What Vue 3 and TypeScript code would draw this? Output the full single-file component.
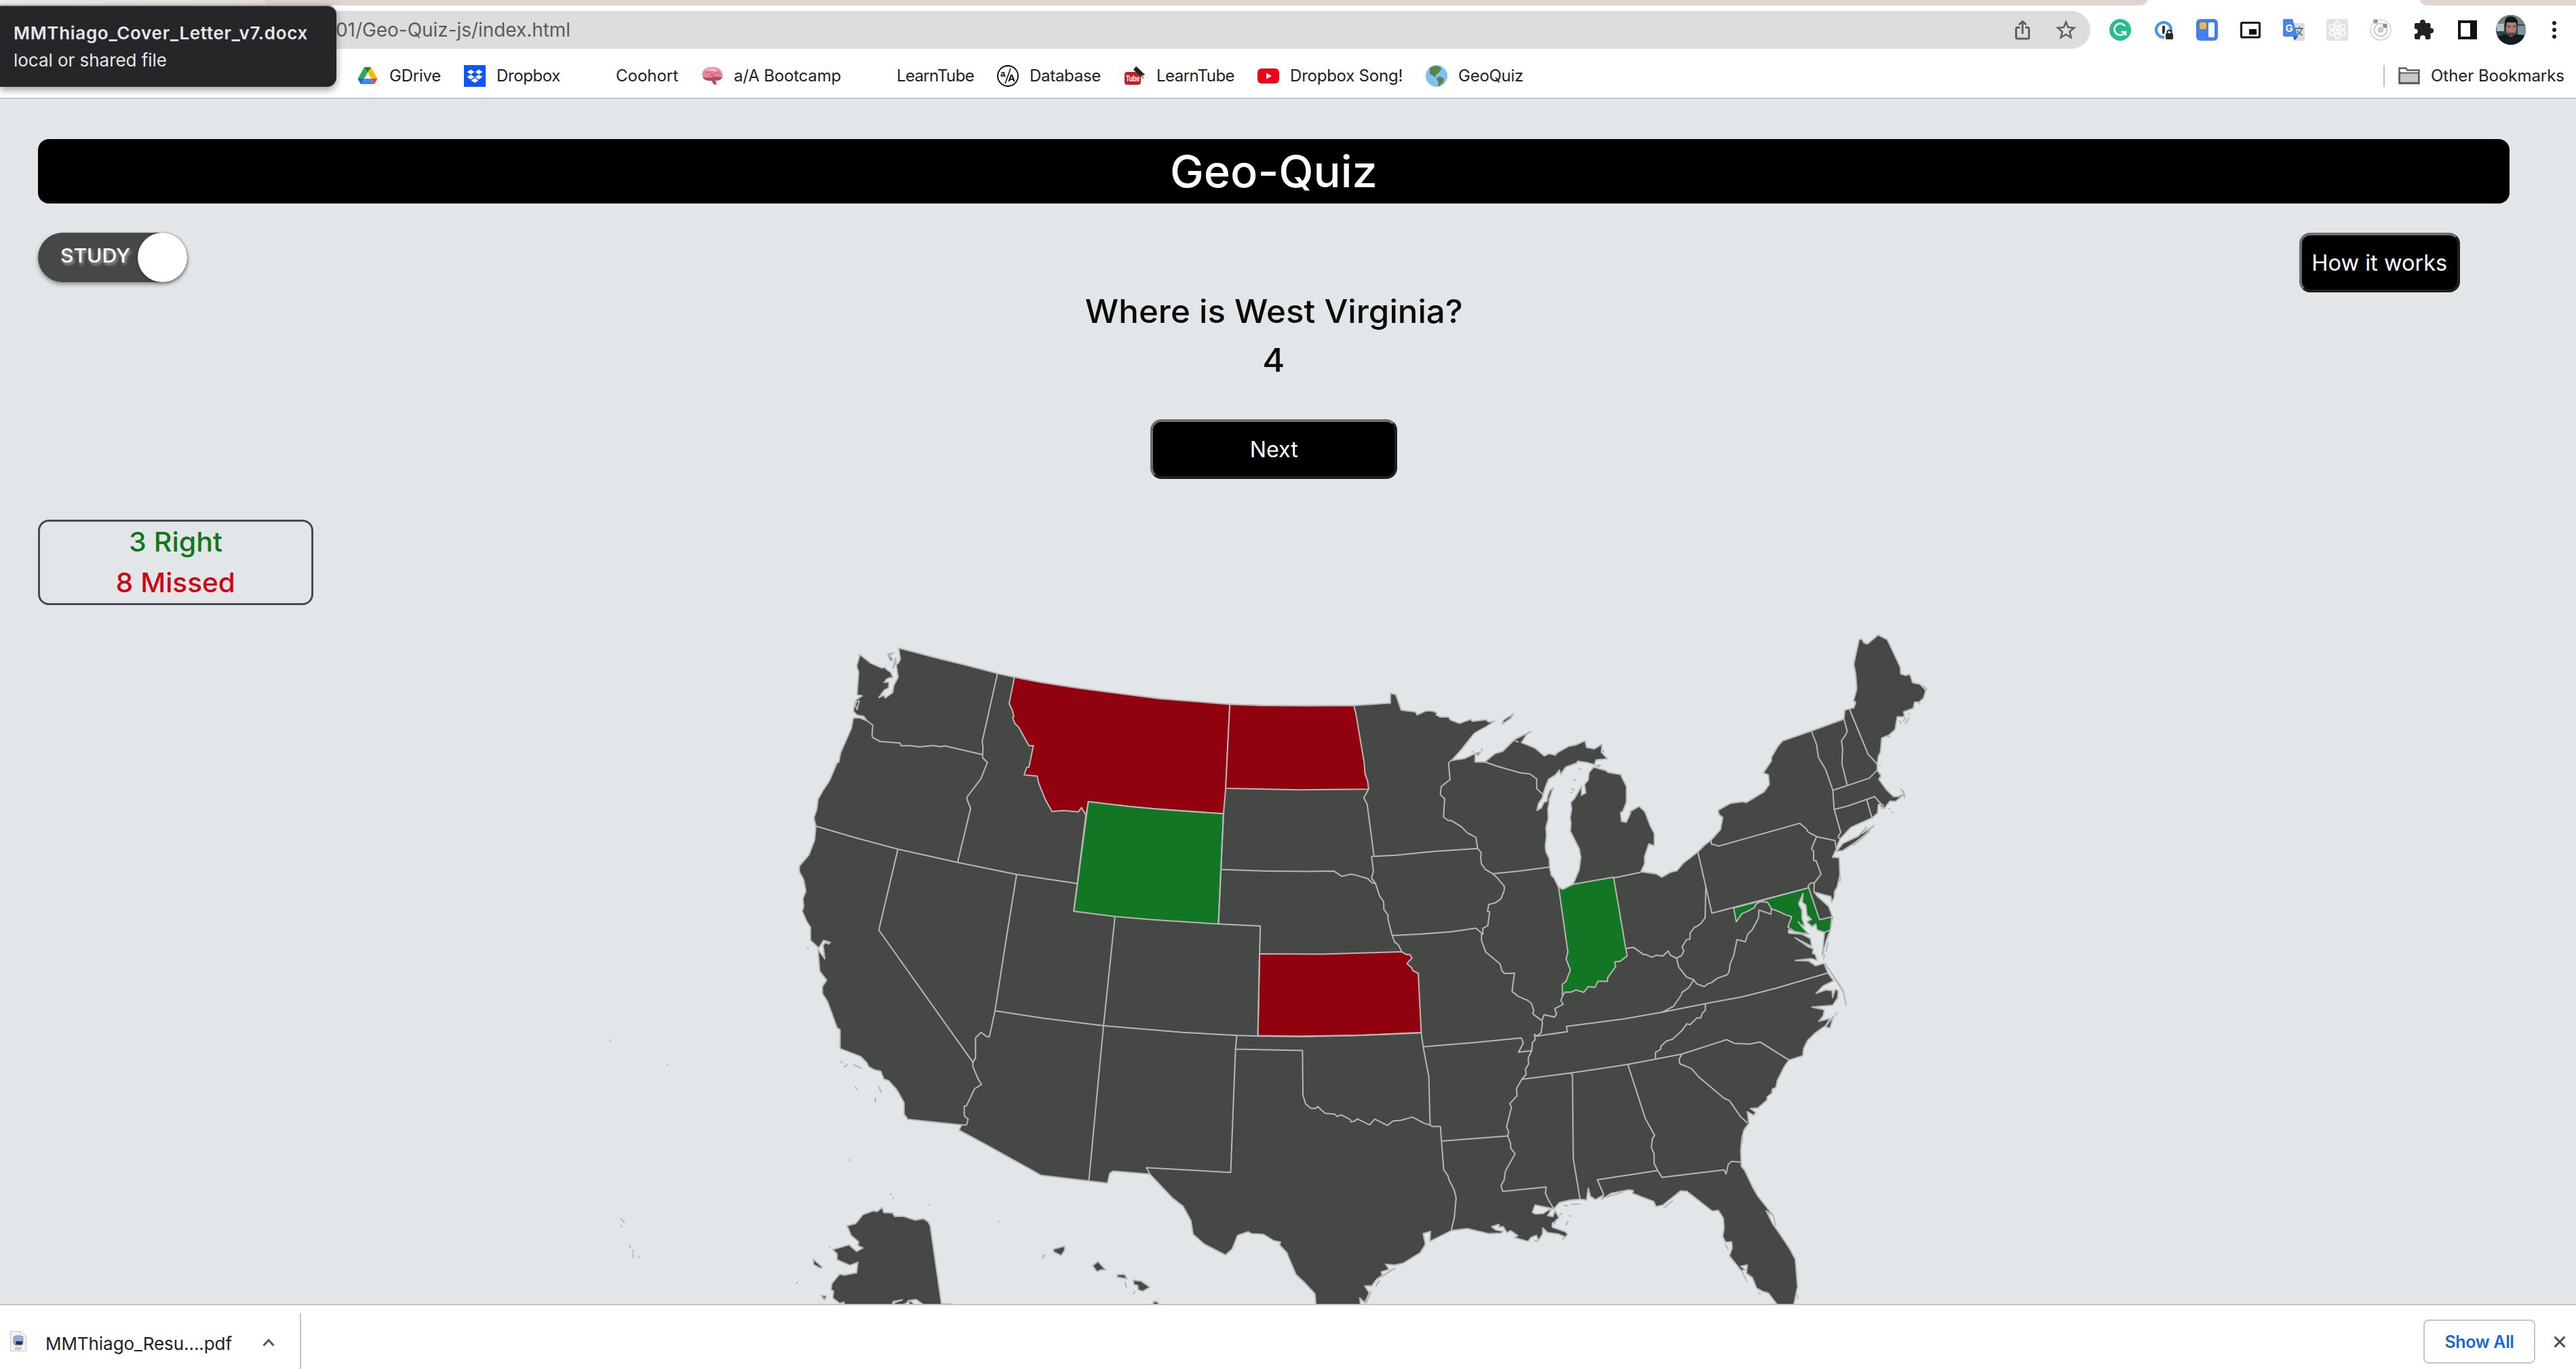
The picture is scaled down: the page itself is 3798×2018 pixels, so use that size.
<script setup lang="ts">
interface Sheet { x: number; y: number; sx: number; sy: number }
interface Bookmark { label: string; width: number; icon: string }
interface State { name: string; status: 'right' | 'missed'; points: string }

const sheets: Record<string, Sheet> = {
  A: { x: 1150, y: 920, sx: 2.8, sy: 3 },
  B: { x: 1700, y: 980, sx: 2.8, sy: 2.8 },
  C: { x: 2080, y: 1000, sx: 3, sy: 2.8 },
  D: { x: 2440, y: 920, sx: 3, sy: 2.8 },
  E: { x: 2100, y: 1400, sx: 2.45, sy: 2.9585 },
  F: { x: 1150, y: 1380, sx: 1.568, sy: 2.8509 },
  G: { x: 0, y: 1500, sx: 1.0453, sy: 3 },
}

function trace(points: string, close = false): string {
  let sheet = sheets.A
  const out: string[] = []
  for (const token of points.trim().split(/\s+/)) {
    if (token.length === 1) {
      sheet = sheets[token]
      continue
    }
    const [px, py] = token.split(',').map(Number)
    out.push(`${(sheet.x + px / sheet.sx).toFixed(1)},${(sheet.y + py / sheet.sy).toFixed(1)}`)
  }
  return `M${out.join('L')}${close ? 'Z' : ''}`
}

const mainland = `A 330,135 375,173 420,194 432,192 445,205 456,212 466,236 450,238 438,245 430,258 450,256 448,282 430,292 408,325 430,314 434,327 465,303 470,270 488,235 480,180 488,174 497,155 490,106
 650,151 770,182 898,218 968,235 1080,258 1230,283 1400,307 1568,330
 B 317,163 450,168 640,169 829,168 980,158 980,118 1002,123 1024,187 1084,195 1090,207 1128,190 1150,190 1172,198 1168,206 1186,216 1220,215 1228,228 1265,242 1312,225 1318,233 1375,227 1384,236 1409,233 1380,252 1330,280
 C 276,232 225,292 180,339 240,330 285,310 284,345 328,345 372,311 407,301 460,252 532,219 512,232 490,265 550,288 590,320 612,311 640,317 648,307 700,280 730,275 771,258 777,285 812,291 846,272 843,305 870,332 820,336 812,356
 780,347 738,342 733,350 685,366 662,397 658,378 640,398 609,417 595,450 585,480 582,492 565,517 558,545 577,535 590,511 602,508 606,485 615,463 630,452 612,500 612,513 606,540 608,580 598,615 600,650 595,690 598,717 612,742 614,780 621,812 634,825 652,860 672,871 718,850 745,790 752,740 746,705 706,630 709,600 705,575 712,540 708,512 725,495 755,445 755,483 774,472 769,437 785,420 788,390 809,366 862,380 872,388 928,397 954,447 953,513 937,550 928,553 932,590 953,594 973,555 970,550 1010,528 1035,550 1060,610 1077,640 1077,690 1053,683 1034,735 1034,765 1018,798 1086,807 1110,821 1150,800 1177,794 1205,763
 D 190,940 220,912 248,892 290,848 300,798 283,785 280,768 333,740 388,733 405,736 483,692 506,662 502,622 480,614 515,565 515,550 545,503 565,482 692,441 836,392 840,355 860,350 880,345 888,322 878,317 893,268 888,205 880,165 903,65 915,62 925,78 940,82 988,45 1028,65 1085,178 1087,205 1110,212 1127,207 1140,242 1172,248 1198,273 1188,305 1168,322 1148,322 1143,347 1100,362 1103,383 1072,382 1062,435 1035,458 1003,470 997,530 988,545 983,578 983,603 1000,626 990,640 1025,685 1055,712 1075,712 1102,700 1088,680 1100,690 1106,716 1098,705 1064,732 1040,730 1013,762 1000,742 988,745 985,780 960,800 868,838 820,885 806,915 801,930
 785,962 815,965 818,1035 806,1085 795,1102 792,1130 782,1147 778,1124 740,1115 703,1105 720,1125 768,1165 785,1208 776,1262 760,1300 740,1365 750,1272 717,1262 712,1238 695,1248 680,1236 672,1228 692,1218 672,1200 668,1160 652,1148 655,1112 635,1155 650,1180 650,1215 662,1245 645,1242 634,1228 655,1254 680,1280 615,1268 590,1262 592,1275 650,1280 688,1298 693,1330 620,1295 680,1333 700,1340 697,1360 708,1362 718,1388 690,1380 620,1388 680,1390 710,1410 748,1400
 E 1458,102 1478,135 1440,158 1415,190 1450,175 1473,178 1475,208 1485,172 1495,180 1493,210 1475,242 1400,250 1445,262 1440,290 1425,312 1465,300 1450,330 1410,365 1385,395 1370,430 1367,462 1317,481 1300,510 1275,570 1270,600 1257,608 1255,625 1238,642 1238,655 1205,690 1178,692 1197,710 1190,722 1167,706 1172,757 1155,785 1147,820 1143,870 1145,945 1157,962 1188,1040 1205,1075 1262,1162 1235,1138 1258,1195 1290,1250 1320,1305 1340,1350 1348,1470 1335,1545 1335,1590
 1295,1590 1270,1540 1243,1497 1222,1490 1200,1475 1185,1430 1163,1410 1167,1375 1143,1380 1158,1395 1145,1400 1102,1335 1112,1300 1110,1274 1088,1275 1078,1250 1083,1215 1080,1170 1062,1137 1040,1140 948,1053 925,1052 862,1113 837,1120 829,1098 752,1062 755,1050 738,1047 675,1062 640,1088 647,1070 618,1090 600,1075 592,1040 586,1092 563,1088 525,1092 487,1103 468,1130
 400,1113 390,1145 400,1152 430,1150 448,1135 458,1135 445,1160 465,1163 472,1138 486,1168 470,1188 462,1192 462,1210 510,1230 518,1243 500,1262 505,1250 485,1240 445,1233 428,1213 427,1240 412,1268 405,1245 385,1255 375,1272 325,1255 338,1247 312,1225 298,1234 285,1207 270,1210 270,1197 243,1208 258,1222 285,1228 278,1236 232,1238 155,1216 97,1225 20,1272 22,1228
 F 1487,1250 1492,1295 1480,1330 1440,1375 1420,1382 1400,1378 1408,1400 1390,1410 1392,1425 1378,1445 1368,1470 1352,1470 1362,1500 1352,1540 1340,1520 1345,1580 1240,1580 1237,1503 1215,1460 1193,1422 1175,1345 1172,1330 1155,1298 1157,1285 1142,1280 1118,1253 1090,1250 1082,1242 1058,1257 1045,1315 1030,1340 980,1293 955,1252 950,1195 932,1135 907,1100 855,1000 770,987 762,997 757,1038 604,1005 460,860 414,815 420,793 296,770 287,748 287,700 270,645 252,608 240,600 233,567 218,562 205,548 200,530 186,505 139,472 139,392 132,385 110,275 98,240 98,212 108,185 92,147
 A 157,1440 185,1480 178,1420 188,1408 200,1415 208,1408 180,1398 160,1432 126,1398 126,1340 112,1318 92,1270 98,1250 95,1215 107,1180 98,1130 80,1095 80,1070 120,1020 143,955 148,893 140,857 152,820 157,775 178,735 205,692 235,615 243,610 250,570 295,460 303,415 330,415 360,428 345,408 318,402 303,385 310,345 327,340 318,378 312,360 315,335 340,317 318,312 325,212 317,185`

const alaska = `F 155,1217 175,1208 192,1170 215,1155 225,1157 236,1140 240,1162 260,1163 265,1178 285,1177 312,1193 332,1187 342,1200 347,1215 376,1580 340,1560 315,1527 300,1530 318,1560 300,1570 298,1530 290,1545 262,1560 265,1540 283,1528 262,1535 255,1570 150,1570 148,1538 138,1543 122,1520 124,1492 118,1485 120,1460 138,1420 148,1425 177,1415 180,1370 162,1383 132,1360 132,1335 122,1317 160,1297 177,1325 192,1310 180,1300 182,1285 165,1258`

const islands: string[] = [
  'C 405,188 410,172 440,155 455,145 442,165',
  'D 803,938 832,905 900,875 935,838 915,865 968,832 930,868 880,905 830,935',
  'F 632,1325 633,1315 658,1303 658,1320 650,1342',
  'F 606,1352 610,1342 613,1340',
  'F 723,1385 735,1367 753,1403 742,1402 733,1410',
  'F 780,1422 797,1422 802,1440 780,1433',
  'F 817,1445 835,1450 855,1475 838,1493 828,1485 827,1468 818,1464',
  'F 798,1453 801,1476',
  'F 863,1535 872,1536 885,1570 863,1560',
  'F 817,1502 821,1493',
  'F 77,1358 97,1390 94,1396 78,1380',
  'F 95,1510 108,1512 103,1528',
  'F 170,540 188,555', 'F 148,550 156,540', 'F 141,527 144,534', 'F 174,634 178,644',
  'F 228,632 234,655', 'F 220,682 221,697', 'F 255,1084 257,1086', 'F 261,1101 262,1103',
  'F 345,1127 346,1129', 'F 506,1198 507,1200', 'F 160,940 161,942', 'F 114,1305 116,1307',
  'G 940,98 941,102', 'G 1028,208 1029,211', 'G 957,890 962,905', 'G 957,920 958,925',
  'G 970,1008 972,1016', 'G 975,1030 975,1037', 'G 976,1045 976,1063', 'G 985,1057 986,1060', 'G 1228,1171 1229,1175',
  'A 445,132 462,130 470,127 452,138 465,158 456,162', 'A 478,172 466,194 478,150', 'A 113,1434 116,1435',
  'C 272,301 276,303', 'C 290,308 308,304 296,320', 'C 313,290 316,297', 'C 744,372 752,375', 'C 722,418 729,421', 'C 712,455 722,461', 'C 708,470 714,471', 'C 820,360 840,358 832,364', 'C 846,292 854,304', 'C 462,258 475,262',
  'D 1120,370 1128,372', 'D 1108,388 1098,400', 'D 1082,400 1090,410', 'D 1108,410 1122,388', 'D 1188,255 1202,268',
  'D 1168,322 1172,330', 'D 1026,462 1040,466', 'D 1035,762 1039,763', 'D 1048,777 1052,778', 'D 995,740 1004,762 1010,748', 'D 995,584 996,585',
  'D 880,912 950,855', 'D 822,1045 818,1062', 'D 780,1225 788,1210', 'D 765,1315 758,1350', 'D 750,1365 746,1382',
  'E 1448,60 1512,175 1524,243 1514,185', 'E 1437,25 1444,5', 'E 1490,276 1485,285', 'E 1478,290 1465,342 1450,335', 'E 1150,820 1148,842',
  'E 530,1110 562,1109', 'E 505,1115 518,1117', 'E 490,1155 496,1150', 'E 524,1160 529,1162', 'E 518,1185 512,1200', 'E 865,1126 897,1095',
  'E 655,1080 715,1058', 'E 1088,1285 1097,1308', 'E 1148,1405 1165,1445', 'E 1207,1498 1214,1500', 'E 1348,1506 1349,1520', 'E 475,1180 470,1195', 'E 398,1268 408,1272', 'E 1262,1165 1268,1200',
  'F 1422,1395 1390,1432 1380,1440', 'F 1386,1447 1378,1470', 'F 1366,1495 1355,1542', 'F 375,1545 395,1546', 'F 39,1456 40,1457',
]

const states: State[] = [
  { name: 'Montana', status: 'missed', points: 'A 968,235 1080,258 1230,283 1400,307 1568,330 B 317,163 300,510 291,615 0,594 A 1440,806 1273,785 1263,845 1245,811 1232,830 1170,824 1123,829 1095,775 1067,700 1062,672 1008,667 1018,635 1028,632 1046,538 1028,538 985,455 970,440 960,412 966,408 958,378 946,352' },
  { name: 'North Dakota', status: 'missed', points: 'B 317,163 450,168 640,169 829,168 838,205 872,405 875,450 886,480 890,513 600,516 300,510' },
  { name: 'Kansas', status: 'missed', points: 'B 440,1193 700,1194 1027,1184 1045,1196 1060,1196 1069,1210 1048,1233 1068,1250 1072,1262 1095,1274 1107,1518 850,1529 590,1533 433,1530' },
  { name: 'Wyoming', status: 'right', points: 'A 1273,785 1440,806 1568,819 B 291,615 270,1070 0,1052 A 1383,1293 1213,1270' },
  { name: 'Indiana', status: 'right', points: 'C 654,862 672,871 718,850 897,820 951,1115 958,1145 927,1167 902,1170 906,1190 871,1235 870,1250 828,1250 815,1275 785,1272 765,1296 760,1294 730,1286 708,1295 682,1295 671,1310 670,1263 687,1250 706,1203 687,1158 695,1130' },
  { name: 'Maryland', status: 'right', points: 'D 348,1172 680,1088 728,1220 782,1208 776,1262 750,1272 717,1262 712,1238 695,1248 680,1236 672,1228 692,1218 672,1200 668,1160 652,1148 655,1112 635,1155 650,1180 650,1215 662,1245 645,1242 634,1228 655,1254 680,1280 615,1268 588,1250 605,1207 580,1200 545,1185 515,1175 498,1148 465,1145 445,1158 440,1170 410,1185 385,1195 360,1228' },
]

const borders: string[] = [
  'A 360,428 383,447 380,495 385,503 413,519 495,526 500,538 540,538 575,543 632,537 668,542 678,538 835,577',
  'A 898,218 835,518 838,548 836,590 856,612 830,683 772,765 772,775 787,815 733,1054',
  'A 148,893 320,947 487,995 733,1054 977,1107 1225,1147',
  'A 487,995 408,1353 F 446,530',
  'A 977,1107 F 524,0 497,314 484,423 478,422 465,404 452,427 452,512 446,530 446,548 458,600 466,623 450,641 431,713 426,714 426,755 435,770 431,793 418,793',
  'A 1263,845 1213,1270',
  'A 1383,1293 F 748,376 714,1028',
  'F 497,314 610,345 748,376 930,404 1056,417 1105,420 1210,422 1330,418 1483,406',
  'B 270,1070 443,1078 440,1193 433,1530',
  'B 291,615 270,1070',
  'B 284,845 470,851 640,853 746,851 780,873 815,864 825,865 886,882 905,900 918,902',
  'B 890,513 870,549 884,575 912,788',
  'B 902,791 1000,786 1160,770 1340,758',
  'B 902,791 910,852 902,880 918,902 935,953 952,978 953,1010 970,1032 970,1050 987,1117 998,1145 1012,1155 1027,1184',
  'B 987,1117 1100,1112 1230,1102 1333,1087 1362,1112',
  'B 1107,1518 F 1487,465 1500,590 1503,793 1508,800 1527,800',
  'B 1232,393 1220,405 1226,473 1190,503 1186,535 1204,553 1199,628 1218,642 1232,643 1273,668 1298,694 1333,712 1340,758 1355,775 1352,795 1356,822 1373,845 1402,862 1420,878 1450,914 1450,930 1437,965 1412,983 1386,989 1381,1017 1390,1020 1382,1076 1361,1088 1362,1112 1356,1112 1356,1138 1373,1185 1433,1235 1440,1262 1451,1274 1492,1273 1482,1348 C 475,1312 515,1328 534,1342 544,1370 540,1385 580,1413',
  'C 328,345 380,362 480,389 527,394 557,415 557,455 585,480',
  'C 362,806 480,795 612,779',
  'C 671,1310 664,1330 674,1345 637,1363 645,1385 636,1398 590,1388 580,1413',
  'C 897,824 1018,800',
  'C 951,1115 985,1110 1030,1140 1040,1140 1068,1151 1085,1142 1115,1146 1138,1125 1148,1142 1175,1155 1198,1144 1208,1125 1200,1108 1220,1078 1235,1077 1235,1052 1257,1025 1263,1025 1285,1010 1302,988 1305,862',
  'D 190,940 252,1193 680,1088 678,1080 690,1068 705,1068 703,1105',
  'D 248,892 250,908 283,916 640,822 670,845 677,858 715,877 796,893 803,930',
  'D 715,877 692,927 702,938 702,975 713,977 735,1032 705,1068',
  'D 515,1175 513,1197 460,1180 458,1213 430,1262 410,1280 400,1311 363,1302 348,1370 333,1400 328,1435 320,1447 275,1462 250,1480 235,1484 218,1496 185,1485 172,1468',
  'D 95,1378 105,1415 140,1457 172,1468 150,1500 120,1520 115,1533 E 900,247 860,272',
  'E 405,377 517,357 513,334 720,302 860,272 1015,235 1150,205 1270,168 1455,102',
  'E 1015,235 1015,265 1005,275 998,297 985,297 960,327 948,323 930,353 897,390 875,398 855,420 853,435 835,447 835,475',
  'E 352,565 527,538 640,518 735,500 835,477 930,455 1092,392 1120,408 1175,411 1213,402 1317,481',
  'F 1487,465 E 175,405 350,385 358,407 340,447 388,440',
  'E 425,312 427,318 422,362 405,377 398,368 400,392 390,405 388,440 375,472 377,497 365,522 368,543 352,565 333,605 335,637 308,672 315,685 297,773 305,795 301,812 312,845 312,865 328,890 293,965 288,1005 277,1028 283,1054 440,1035 437,1062 450,1095 468,1130',
  'E 62,834 301,812',
  'E 58,770 62,834 70,960 85,985 90,1005 107,1045 115,1082 108,1170 97,1225',
  'F 1056,417 1053,475 1208,480 1209,668 1215,705 1227,723 1238,724 1243,716 1260,744 1283,748 1288,758 1297,751 1318,770 1320,780 1327,778 1335,768 1363,793 1375,769 1404,795 1418,776 1435,774 1462,760 1490,787 1503,793',
  'F 1053,475 1042,993 847,973 855,1000',
  'E 527,538 535,545 538,910 563,1092',
  'E 735,500 798,735 832,810 824,822 820,862 830,890 830,932 843,963 859,993 1083,960 1090,978 1098,935 1110,923 1143,926',
  'E 843,963 625,1003 647,1065 640,1088',
  'E 930,455 920,480 923,497 965,518 990,553 1083,648 1102,658 1142,727 1167,755',
  'D 692,441 715,497 723,550 755,600 787,686 793,765 822,860 810,878 820,888',
  'D 836,392 850,440 848,450 825,482 830,515 827,577 850,663',
  'D 860,350 943,537 983,578',
  'D 787,686 948,636 983,603',
  'D 793,765 855,750 972,712 1000,742',
  'D 937,725 960,800',
]

const bookmarks: Bookmark[] = [
  { label: 'GDrive', width: 76, icon: 'drive' },
  { label: 'Dropbox', width: 94, icon: 'dropbox' },
  { label: 'Coohort', width: 92, icon: 'none' },
  { label: 'a/A Bootcamp', width: 158, icon: 'brain' },
  { label: 'LearnTube', width: 114, icon: 'none' },
  { label: 'Database', width: 105, icon: 'aa' },
  { label: 'LearnTube', width: 115, icon: 'tube' },
  { label: 'Dropbox Song!', width: 166, icon: 'youtube' },
  { label: 'GeoQuiz', width: 96, icon: 'globe' },
]

/* Tracks a line of text so that it takes exactly the given width;
   with .wide the letters themselves are widened instead. */
const vFit = {
  mounted(el: HTMLElement, binding: { value: number; modifiers: Partial<Record<string, boolean>> }) {
    const natural = el.getBoundingClientRect().width
    if (binding.modifiers.wide) {
      el.style.transform = `scaleX(${(binding.value / natural).toFixed(4)})`
      return
    }
    const count = (el.textContent ?? '').trim().length
    el.style.letterSpacing = `${((binding.value - natural) / count).toFixed(3)}px`
  },
}
</script>

<template>
  <div class="window">
    <div class="chrome">
      <div class="tabs"><i class="tab-left"></i><i class="tab-mid"></i><i class="tab-gap"></i><i class="tab-right"></i></div>
      <div class="toolbar">
        <div class="address">
          <span class="url" v-fit="346">01/Geo-Quiz-js/index.html</span>
          <div class="address-icons">
            <svg class="i32" viewBox="0 0 32 32" fill="none" stroke="#5f6164" stroke-width="3"><path d="M12 12.5H8.500Q6.500 12.500 6.500 14.500V27Q6.500 29 8.500 29H23.500Q25.500 29 25.500 27V14.500Q25.500 12.500 23.500 12.500H20M16 22V4M10.500 8.500 16 3.500 21.500 8.500" /></svg>
            <svg class="i32" viewBox="0 0 32 32" fill="none" stroke="#5f6164" stroke-width="2.600"><path d="M16 4.500 19.300 12.300 28 13 21.500 18.700 23.500 27.300 16 22.700 8.500 27.300 10.500 18.700 4 13 12.700 12.300Z" /></svg>
          </div>
        </div>
        <div class="extensions">
          <svg class="i32" viewBox="0 0 32 32"><circle cx="16" cy="16" r="16" fill="#27bd91" /><path d="M23 10.500A8.500 8.500 0 1 0 23.500 19H17.500M24 19V24.500" fill="none" stroke="#fff" stroke-width="2.600" /></svg>
          <svg class="i32" viewBox="0 0 32 32"><circle cx="16" cy="16" r="11" fill="#fff" stroke="#3f95f7" stroke-width="4" /><path d="M16 10V22" stroke="#333" stroke-width="4" /><path d="M17 19H32V32H17Z" fill="#fff" /><rect x="19" y="21" width="11" height="9" rx="1.500" fill="#2b2b2b" /><path d="M21.500 22V19.500A3 3 0 0 1 27.500 19.500V22" fill="none" stroke="#2b2b2b" stroke-width="2" /></svg>
          <svg class="i32" viewBox="0 0 32 32"><rect width="32" height="32" rx="6" fill="#4280f0" /><rect x="5" y="5" width="10" height="10" rx="2" fill="#fbb829" /><rect x="18" y="5" width="9" height="22" rx="2" fill="#fff" /></svg>
          <svg class="i32" viewBox="0 0 32 32"><rect x="2.500" y="5.500" width="27" height="21.500" rx="1.500" fill="#fff" stroke="#111" stroke-width="3" /><rect x="14" y="15" width="11" height="8" fill="#000" /></svg>
          <svg class="i32" viewBox="0 0 32 32"><path d="M13 6H30Q32 6 32 8V32H19Z" fill="#dcdcdc" /><path d="M18 14H30M24 11V14M20 24Q27 20 27.500 14M21 17Q24 22 29 24" fill="none" stroke="#5f7782" stroke-width="1.800" /><path d="M2 0H14L22 26H2Q0 26 0 24V2Q0 0 2 0Z" fill="#4a82ee" /><path d="M15 26H22L17 32Z" fill="#3a56b8" /><text x="3.500" y="19" class="tiny-g">G</text></svg>
          <svg class="i32" viewBox="0 0 32 32"><rect width="32" height="32" rx="2" fill="#e3e3e3" /><g fill="none" stroke="#fff" stroke-width="1.700" transform="rotate(90 16 16)"><ellipse cx="16" cy="16" rx="13" ry="5" /><ellipse cx="16" cy="16" rx="13" ry="5" transform="rotate(60 16 16)" /><ellipse cx="16" cy="16" rx="13" ry="5" transform="rotate(120 16 16)" /></g><circle cx="16" cy="16" r="2.600" fill="#fff" /></svg>
          <svg class="i32" viewBox="0 0 32 32" fill="none" stroke="#d2d2d2"><circle cx="16" cy="16" r="15" stroke-width="1.600" /><circle cx="16" cy="16" r="9.500" stroke-width="2.400" /><circle cx="16" cy="16" r="4.500" fill="#c8c8c8" stroke="none" /><circle cx="8.500" cy="3.500" r="3.300" fill="#979797" stroke="none" /><circle cx="22.500" cy="10" r="3.300" fill="#8d8d8d" stroke="none" /></svg>
          <svg class="i32" viewBox="0 0 32 32" fill="#202124"><path d="M2 8Q2 6 4 6H10V5A4 4 0 0 1 18 5V6H23.500Q25.500 6 25.500 8V13.500H27A3.800 3.800 0 0 1 27 21H25.500V28Q25.500 30 23.500 30H18V28A3.800 3.800 0 0 0 10 28V30H4Q2 30 2 28V22H3.500A3.800 3.800 0 0 0 3.500 14.500H2Z" /></svg>
          <svg class="i32" viewBox="0 0 32 32"><path fill="#111214" fill-rule="evenodd" d="M2 2H30V30H2ZM6 6V26H20V6Z" /></svg>
          <svg class="avatar" viewBox="0 0 44 44"><clipPath id="face"><circle cx="22" cy="22" r="22" /></clipPath><g clip-path="url(#face)"><rect width="44" height="44" fill="#33454a" /><path d="M0 0H44V14H0Z" fill="#71857c" /><path d="M1 13H12V24H1Z" fill="#a9bfc5" /><path d="M32 16H44V29H32Z" fill="#849294" /><path d="M0 33Q12 28 17 28H27Q36 28 44 34V44H0Z" fill="#111c25" /><ellipse cx="22.500" cy="20" rx="7.500" ry="12" fill="#b07e6a" /><path d="M13 14Q12 2 22 2Q33 3 32 15L29 11H16L14 18Z" fill="#151619" /><path d="M17 25Q22 28 28 25L26 31H19Z" fill="#5a4038" /><path d="M17 17H21M25 17H28" stroke="#3d2a24" stroke-width="1.500" /></g></svg>
          <svg class="i32" viewBox="0 0 32 32" fill="#202124"><circle cx="16" cy="6" r="3" /><circle cx="16" cy="16" r="3" /><circle cx="16" cy="26" r="3" /></svg>
        </div>
      </div>
      <div class="bookmarks">
        <div v-for="(b, i) in bookmarks" :key="i" class="bookmark">
          <svg class="i32" viewBox="0 0 32 32">
            <template v-if="b.icon === 'drive'"><path d="M11 3 1.500 20 6 28 16 11Z" fill="#34a853" /><path d="M21 3 30.500 20H21L12 3Z" fill="#fbbc04" /><path d="M11 3H21L16 11Z" fill="#188038" /><path d="M10.500 20H21.500L26 28H6Z" fill="#4285f4" /><path d="M1.500 20H10.500L6 28Z" fill="#1967d2" /><path d="M21.500 20H30.500L26 28Z" fill="#ea4335" /></template>
            <template v-else-if="b.icon === 'dropbox'"><rect width="32" height="32" fill="#0d56ff" /><path fill="#fff" d="M10 6.500 15.500 10 10 13.500 4.500 10ZM22 6.500 27.500 10 22 13.500 16.500 10ZM10 14 15.500 17.500 10 21 4.500 17.500ZM22 14 27.500 17.500 22 21 16.500 17.500ZM16 19 21.500 22.500 16 26 10.500 22.500Z" /></template>
            <template v-else-if="b.icon === 'brain'"><path d="M1 14Q2 4 13 3Q25 1 30 10Q34 17 28 22L22 24 23 29 19 28 16 23Q4 24 1 14Z" fill="#e789a0" /><path d="M5 8Q11 3 19 5Q27 8 24 10Q12 7 5 8Z" fill="#f5b9c9" /><path d="M2 17Q9 20 15 18T31 18L27 22 20 22 22 29 18 28 15 23Q4 24 2 17Z" fill="#b04d63" /><path d="M6 12Q10 9 14 12T22 11 28 15M10 17Q15 13 19 17" fill="none" stroke="#c75f7c" stroke-width="1.500" /></template>
            <template v-else-if="b.icon === 'aa'"><circle cx="16" cy="16" r="15" fill="#fff" stroke="#000" stroke-width="1.800" /><path d="M20 5 12 27" stroke="#000" stroke-width="1.500" /><text x="5" y="17" class="aa-small">a</text><text x="16" y="24" class="aa-big">A</text></template>
            <template v-else-if="b.icon === 'tube'"><rect x="1" y="10" width="24" height="19" rx="4" fill="#c22025" /><text x="3" y="24" class="tube-text" textLength="20" lengthAdjust="spacingAndGlyphs">Tube</text><path d="M14 7 18 1.500 31 14 26 17Z" fill="#22232b" /><path d="M28 14V20" stroke="#c59a4c" stroke-width="2" /></template>
            <template v-else-if="b.icon === 'youtube'"><rect y="5" width="32" height="22" rx="6" fill="#f00218" /><path d="M13 11.500 21 16 13 20.500Z" fill="#fff" /></template>
            <template v-else-if="b.icon === 'globe'"><circle cx="16" cy="16" r="16" fill="#7fc1f2" /><path d="M6 4Q12 1 16 1L22 3 23 7 18 12 14 15 15 18 11 16 6 12ZM17 18 22 17 27 20 26 25 20 31 18 30 19 25 16 21Z" fill="#55883c" /></template>
          </svg>
          <span v-fit="b.width" class="fit">{{ b.label }}</span>
        </div>
        <div class="other">
          <svg class="i32" viewBox="0 0 32 32"><path d="M1.500 27V4.500H11L13.500 7.500H30.500V27Z" fill="#fff" stroke="#5a5c5f" stroke-width="2.400" /><path d="M2 11.500H30V26H2Z" fill="#c8c8c8" stroke="#5a5c5f" stroke-width="2" /></svg>
          <span v-fit="197" class="fit">Other Bookmarks</span>
        </div>
      </div>
      <div class="tooltip">
        <div class="tip-title"><span v-fit="434" class="fit">MMThiago_Cover_Letter_v7.docx</span></div>
        <div class="tip-sub"><span v-fit="226" class="fit">local or shared file</span></div>
      </div>
    </div>

    <main class="page">
      <h1 class="title"><span v-fit.wide="306" class="fit">Geo-Quiz</span></h1>
      <div class="controls">
        <div class="toggle"><span v-fit.wide="103" class="fit study">STUDY</span><i class="knob"></i></div>
        <div class="question">
          <div class="prompt"><span v-fit.wide="557" class="fit">Where is West Virginia?</span></div>
          <div class="prompt"><span v-fit.wide="33" class="fit">4</span></div>
          <button class="btn next"><span v-fit.wide="71" class="fit">Next</span></button>
        </div>
        <button class="btn how"><span v-fit.wide="200" class="fit">How it works</span></button>
      </div>
      <div class="score">
        <div class="good"><span v-fit.wide="138" class="fit">3 Right</span></div>
        <div class="bad"><span v-fit.wide="176" class="fit">8 Missed</span></div>
      </div>
      <svg class="map" viewBox="0 900 3798 1022" width="3798" height="1022">
        <path class="land" :d="trace(mainland, true)" />
        <path class="land" :d="trace(alaska, true)" />
        <path v-for="(p, i) in islands" :key="'i' + i" class="land" :d="trace(p, true)" />
        <path v-for="s in states" :key="s.name" :class="['land', s.status]" :d="trace(s.points, true)" />
        <path v-for="(p, i) in borders" :key="'b' + i" class="border" :d="trace(p)" />
      </svg>
    </main>

    <footer class="downloads">
      <div class="download">
        <svg class="pdf" viewBox="0 0 24 30"><path d="M.5.500H15L23.500 8V29.500H.5Z" fill="#f3f3f3" stroke="#c9c9c9" /><path d="M15 .5V8H23.500Z" fill="#fff" stroke="#c9c9c9" /><rect x="5" y="7" width="14" height="14" rx="4" fill="#8faede" stroke="#8c8f96" /><path d="M8 15H18V20H9Z" fill="#26344e" /><text x="7" y="27.500" class="pdf-text">PDF</text></svg>
        <span class="file"><span v-fit="275" class="fit">MMThiago_Resu....pdf</span></span>
        <svg class="caret" viewBox="0 0 18 12"><path d="M1.500 10.500 9 2.500 16.500 10.500" fill="none" stroke="#55575a" stroke-width="3" /></svg>
      </div>
      <div class="shelf-actions">
        <div class="show-all"><span v-fit="102" class="fit">Show All</span></div>
        <svg class="close" viewBox="0 0 18 18"><path d="M1.500 1.500 16.500 16.500M16.500 1.500 1.500 16.500" stroke="#4a4c4f" stroke-width="3" /></svg>
      </div>
    </footer>
  </div>
</template>

<style>
body { margin: 0; overflow: hidden; }
</style>

<style scoped>
.window { width: 3798px; height: 2018px; display: flex; flex-direction: column; overflow: hidden; font-family: Inter, Roboto, sans-serif; background: #fff; }
.fit { display: inline-block; white-space: nowrap; }
.i32 { width: 32px; height: 32px; display: block; flex: none; overflow: visible; }
.chrome { height: 144px; border-bottom: 2px solid #c3c5c5; background: #fff; position: relative; flex: none; }
.tabs { height: 8px; display: flex; background: #fff; }
.tab-left { width: 400px; background: linear-gradient(90deg, #efebe9, #e8e1dd); }
.tab-mid { width: 2776px; background: #dfd5d0; border-bottom-right-radius: 12px 8px; border-bottom-left-radius: 12px 8px; margin-left: -10px; }
.tab-gap { width: 402px; }
.tab-right { flex: 1; background: #dfd5d0; border-bottom-left-radius: 12px 8px; }
.toolbar { height: 72px; display: flex; align-items: center; }
.address { width: 3082px; height: 56px; border-radius: 0 28px 28px 0; background: #ddd; display: flex; align-items: center; justify-content: space-between; box-sizing: border-box; padding: 0 20px 0 495px; }
.url { font-size: 28px; color: #5a5c5f; white-space: nowrap; }
.address-icons { display: flex; gap: 32px; }
.extensions { display: flex; gap: 32px; padding-left: 28px; align-items: center; }
.avatar { width: 44px; height: 44px; margin: 0 -6px; flex: none; }
.tiny-g { font: 700 15px Inter, sans-serif; fill: #fff; }
.bookmarks { height: 64px; display: flex; align-items: center; gap: 34px; padding-left: 526px; font-size: 24px; color: #202124; line-height: 32px; }
.bookmark { display: flex; gap: 16px; flex: none; }
.other { margin-left: auto; border-left: 2px solid #bfc1c3; display: flex; gap: 16px; padding: 0 17px 0 20px; height: 32px; }
.aa-small { font: 700 13px "Liberation Sans", sans-serif; }
.aa-big { font: 700 15px "Liberation Sans", sans-serif; }
.tube-text { font: 700 12px "Liberation Sans", sans-serif; fill: #fff; }
.tooltip { position: absolute; left: 0; top: 7px; width: 496px; height: 121px; box-sizing: border-box; padding: 20px 0 0 20px; background: #262629; border-top: 2px solid #aaa6a5; border-radius: 0 14px 14px 0; box-shadow: 0 4px 12px #0006; color: #e5e7ea; font-size: 26px; line-height: 40px; }
.tip-title { font-weight: 600; }
.page { height: 1776px; flex: none; box-sizing: border-box; background: #e2e6e9; padding-top: 59px; overflow: hidden; font-weight: 500; }
.title { margin: 0 98px 0 56px; height: 95px; line-height: 95px; border-radius: 16px; background: #000; color: #fff; font-size: 65px; font-weight: 500; text-align: center; }
.controls { margin: 43px 98px 0 56px; display: grid; grid-template-columns: 1fr auto 1fr; align-items: start; }
.toggle { width: 220px; height: 73px; border-radius: 37px; background: #464846; box-shadow: 0 3px 6px #0006; display: flex; align-items: center; justify-content: space-between; color: #fff; font-size: 29px; font-weight: 500; }
.study { margin: -6px 0 0 33px; text-shadow: 2px 3px 4px #aaa; transform-origin: left center; }
.knob { width: 73px; height: 73px; border-radius: 50%; background: #fff; box-shadow: 0 1px 4px #0005; }
.question { display: flex; flex-direction: column; align-items: center; padding-top: 80px; }
.prompt { font-size: 48px; line-height: 72px; color: #0a0a0a; }
.btn { box-sizing: border-box; height: 88px; padding: 0; border-radius: 16px; border: 4px solid; border-color: #6c6d6f #202020 #202020 #6c6d6f; background: #000; color: #fff; font: 400 32px Inter, sans-serif; }
.next { width: 364px; margin-top: 51px; }
.how { width: 237px; justify-self: end; margin-right: 73px; }
.score { margin: 60px 0 0 56px; width: 406px; height: 126px; box-sizing: border-box; border: 3px solid #484a4a; border-radius: 16px; text-align: center; font-size: 40px; line-height: 60px; }
.good { color: #12761b; }
.bad { color: #cb0915; }
.map { display: block; margin-top: 8px; }
.land { fill: #464846; stroke: #b6b7b6; stroke-width: 2; stroke-linejoin: round; }
.right { fill: #137625; }
.missed { fill: #92010e; }
.border { fill: none; stroke: #b6b8b7; stroke-width: 2; stroke-linejoin: round; }
.downloads { height: 96px; box-sizing: border-box; border-top: 2px solid #c3c5c5; background: #fff; display: flex; justify-content: space-between; }
.download { margin-top: 12px; width: 444px; border-right: 2px solid #bfc1c3; display: flex; align-items: center; padding: 0 0 0 15px; box-sizing: border-box; font-size: 26px; color: #202124; }
.pdf { width: 24px; height: 30px; flex: none; }
.pdf-text { font: 5px "Liberation Sans", sans-serif; fill: #777; }
.file { margin: 7px 0 0 28px; }
.caret { width: 18px; height: 12px; margin: 3px 0 0 45px; }
.shelf-actions { display: flex; align-items: center; gap: 27px; padding-right: 15px; }
.show-all { width: 165px; height: 65px; margin-top: 13px; box-sizing: border-box; border: 2px solid #c4c7ca; border-radius: 8px; display: flex; align-items: center; justify-content: center; color: #1a66d8; font-size: 25px; font-weight: 600; }
.close { width: 18px; height: 18px; margin-top: 14px; }
</style>
